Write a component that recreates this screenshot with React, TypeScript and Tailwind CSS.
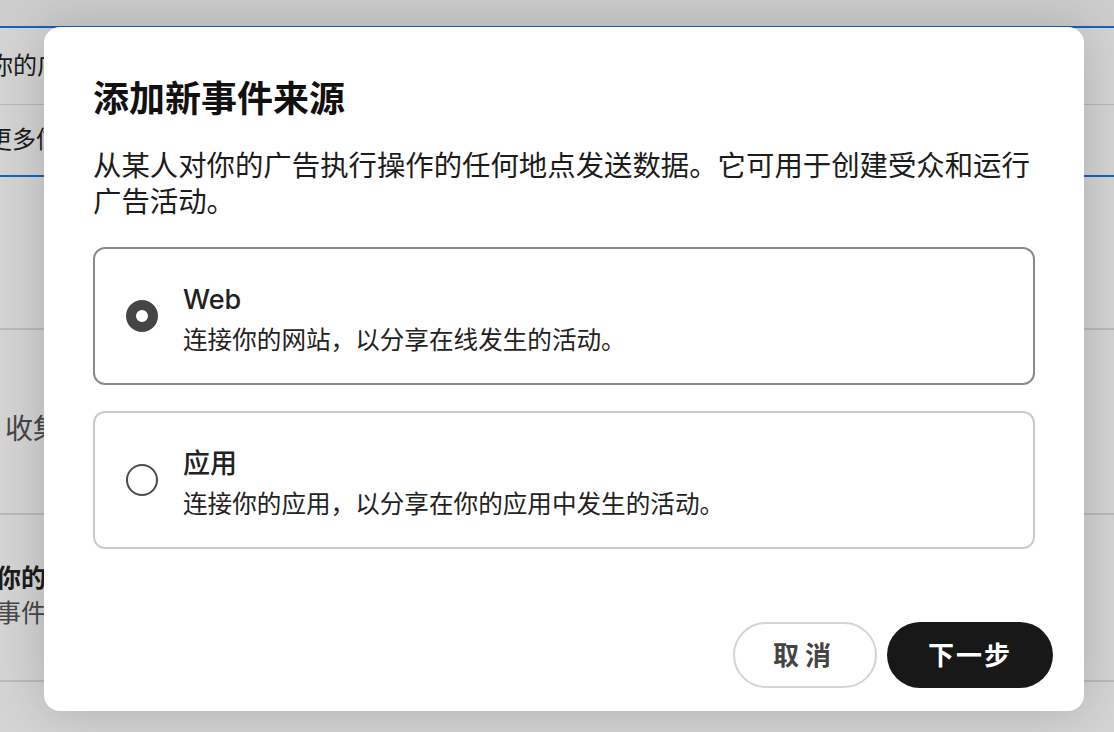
import { useState } from "react";

const font = "font-['Inter','Noto_Sans_CJK_SC',sans-serif]";

interface OptionProps {
  title: string;
  desc: string;
  selected: boolean;
  onSelect: () => void;
}

function SourceOption({ title, desc, selected, onSelect }: OptionProps) {
  return (
    <button
      onClick={onSelect}
      className={`${
        selected ? "border-[#8a8a8a]" : "border-[#cbcbcb]"
      } flex h-[138px] w-full items-center rounded-[12px] border-2 pl-[31px] text-left`}
    >
      <span
        className={`${
          selected ? "border-[10px] border-[#444546]" : "border-2 border-[#4a4a4a]"
        } h-[32px] w-[32px] shrink-0 rounded-full bg-white`}
      />
      <span className="ml-[25px] flex flex-col pt-[6px]">
        <span className="text-[27px] font-medium leading-[34px] text-[#222]">{title}</span>
        <span className="mt-[7px] text-[24.6px] leading-[32px] text-[#222]">{desc}</span>
      </span>
    </button>
  );
}

export default function App() {
  const [source, setSource] = useState("web");

  return (
    <div className={`${font} relative h-[732px] w-[1114px] overflow-hidden bg-white`}>
      {/* Page behind the dialog */}
      <div className="flex flex-col text-[#222]">
        <div className="h-[26px] bg-[#f7f7f8]" />
        <div className="border-y-2 border-[#1877f2]">
          <div className="flex h-[77px] items-center border-b border-[#ddd] text-[24px] -ml-[11px]">
            你的广告账户
          </div>
          <div className="flex h-[70px] items-center text-[24px] -ml-[12px]">更多信息</div>
        </div>
        <div className="h-[153px] border-b-2 border-[#e0e0e0]" />
        <div className="flex h-[185px] items-center border-b-2 border-[#e0e0e0] pl-[5px] pt-[14px] text-[28px] text-[#555]">
          收集数据
        </div>
        <div className="flex h-[167px] flex-col justify-center border-b-2 border-[#e0e0e0] -ml-[4px] pb-[4px] text-[25px] leading-[35px]">
          <span className="font-bold">你的事件</span>
          <span className="text-[#555]">事件管理</span>
        </div>
      </div>

      {/* Dim overlay */}
      <div className="absolute inset-0 bg-black/[0.17]" />

      {/* Dialog */}
      <div className="absolute left-[44px] top-[27px] flex h-[684px] w-[1040px] flex-col rounded-[16px] bg-white px-[49px] shadow-[0_0_50px_rgba(0,0,0,0.18)]">
        <h2 className="pt-[50px] text-[36px] font-bold leading-[44px] text-[#111]">添加新事件来源</h2>
        <p className="mt-[27px] text-[28.4px] leading-[36px] text-[#1c1c1c]">
          从某人对你的广告执行操作的任何地点发送数据。它可用于创建受众和运行广告活动。
        </p>
        <div className="mt-[27px] flex flex-col gap-[26px]">
          <SourceOption
            title="Web"
            desc="连接你的网站，以分享在线发生的活动。"
            selected={source === "web"}
            onSelect={() => setSource("web")}
          />
          <SourceOption
            title="应用"
            desc="连接你的应用，以分享在你的应用中发生的活动。"
            selected={source === "app"}
            onSelect={() => setSource("app")}
          />
        </div>
        <div className="mt-auto -mr-[18px] mb-[23px] flex justify-end gap-[10px]">
          <button className="h-[66px] w-[144px] rounded-full border-2 border-[#d4d4d4] bg-white text-[26px] font-bold tracking-[6px] text-[#444]">
            取消
          </button>
          <button className="h-[66px] w-[166px] rounded-full bg-[#171817] text-[26px] font-bold tracking-[2px] text-white">
            下一步
          </button>
        </div>
      </div>
    </div>
  );
}
